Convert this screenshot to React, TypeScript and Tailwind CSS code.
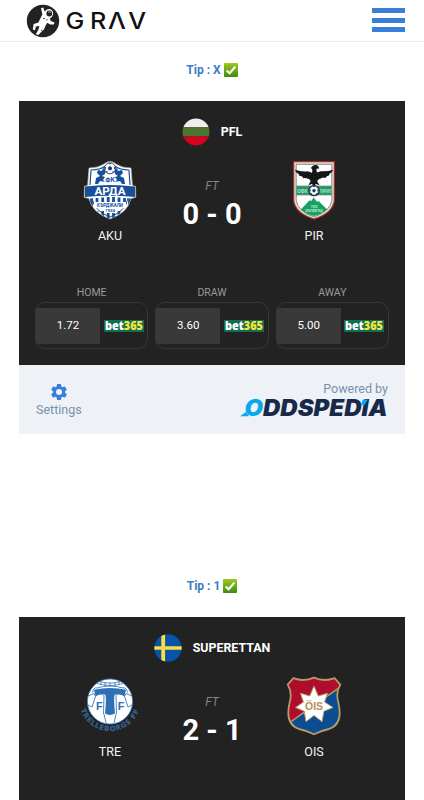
import type { ReactNode } from 'react';

type Odd = { label: string; value: string };

type Match = {
  tip: string;
  league: string;
  flag: ReactNode;
  home: string;
  away: string;
  homeCrest: ReactNode;
  awayCrest: ReactNode;
  score: string;
  odds: Odd[];
};

const GravLogo = () => (
  <svg width="124" height="37" viewBox="0 0 124 37">
    <circle cx="17" cy="17" r="16.2" fill="#222" />
    <path
      d="M15 4.2 17.2 3.6 18.8 7.4Q20.5 4.4 24 5Q27.8 6.5 27 10.7Q26 14 23.8 14.5L24.8 17 28.6 18.4 27.8 20.6 24.2 20.6 21.3 18.8 19.6 21.6 18 25.4 14.2 29 12.4 31 9.8 30.2 12.6 25.2 13.4 22 9.8 22.6 9 26.2 6.8 25.4 7.6 20 12.4 18.4 14.8 13.6 16.4 10.4z"
      fill="#fff"
    />
    <circle cx="23.3" cy="9.5" r="2.9" fill="#222" />
    <path d="M22.2 8.2c1-.8 2.3-.4 2.8.7" stroke="#fff" strokeWidth=".7" fill="none" />
    <path d="M17.2 14.5h1.6M20.3 15.8h1.2M15 26l1.6 1.2" stroke="#222" strokeWidth="1" />
    <text
      transform="scale(1.12 1)"
      x="35.2 57.2 73.2 91.2"
      y="25"
      fontFamily="Inter, sans-serif"
      fontWeight="500"
      fontSize="22.5"
      fill="#111"
    >
      GRΛV
    </text>
  </svg>
);

const Check = () => (
  <svg width="14" height="14" viewBox="0 0 14 14">
    <defs>
      <linearGradient id="check" x1="0" y1="0" x2="0" y2="1">
        <stop offset="0" stopColor="#9ccb1b" />
        <stop offset="1" stopColor="#3d8b14" />
      </linearGradient>
    </defs>
    <rect width="14" height="14" rx=".8" fill="url(#check)" />
    <path d="M2.6 7.5 5.6 10.2 11.4 3.6" stroke="#fff" strokeWidth="2.1" fill="none" />
  </svg>
);

const BulgariaFlag = () => (
  <svg width="28" height="28" viewBox="0 0 28 28">
    <clipPath id="bg-clip">
      <circle cx="14" cy="14" r="13.5" />
    </clipPath>
    <g clipPath="url(#bg-clip)">
      <path d="M0 0h28v9.2H0z" fill="#eee" />
      <path d="M0 9.2h28v9.3H0z" fill="#4c742f" />
      <path d="M0 18.5h28V28H0z" fill="#d8001f" />
    </g>
  </svg>
);

const SwedenFlag = () => (
  <svg width="28" height="28" viewBox="0 0 28 28">
    <clipPath id="se-clip">
      <circle cx="14" cy="14" r="13.7" />
    </clipPath>
    <g clipPath="url(#se-clip)">
      <path d="M0 0h28v28H0z" fill="#0753a8" />
      <path d="M7.3 0h3.8v28H7.3zM0 12.2h28v3.6H0z" fill="#ffda44" />
    </g>
  </svg>
);

const Ball = ({ x, y, r }: { x: number; y: number; r: number }) => (
  <g transform={`translate(${x} ${y}) scale(${r / 5})`}>
    <circle r="5" fill="#fff" stroke="#173a6b" strokeWidth=".8" />
    <path d="M0-2 2-.6 1.2 1.8h-2.4L-2-.6zM-1.6-4.6h3.2L0-3.4zM4.6-1.5 4.4 1.4 3.3-.6zM-4.6-1.5-4.4 1.4-3.3-.6zM2 3l1.6-.5L2.2 4.3zM-2 3l-1.6-.5 1.4 1.8z" fill="#173a6b" />
  </g>
);

const ArdaCrest = () => (
  <svg width="60" height="60" viewBox="0 0 60 60">
    <clipPath id="arda">
      <path d="M8 33h44c-1 12-8 20-22 26C16 53 9 45 8 33z" />
    </clipPath>
    <path d="M9 8Q18 8 24 4Q30-.8 36 4Q42 8 51 8L52.4 25.5 55.6 26.3 55.8 37.3 51 38.5Q48 52.5 30 59Q12 52.5 9 38.5L4.2 37.3 4.4 26.3 7.6 25.5z" fill="#fff" stroke="#c4b38a" strokeWidth=".7" />
    <path d="M11 10Q20 10 25 6.3M49 10Q40 10 35 6.3M11 10 10 25M49 10 50 25" stroke="#174f9b" strokeWidth="1.2" fill="none" />
    <g fill="#174f9b">
      <path d="M15 24l1-6 4-2-3-3 1-3 4 1 1-3 3 2-1 4-3 2 3 1-2 3 2 2-5-1-2 3zM45 24l-1-6-4-2 3-3-1-3-4 1-1-3-3 2 1 4 3 2-3 1 2 3-2 2 5-1 2 3z" />
      <path d="M4.9 26.6Q30 23.6 55.1 26.6V37Q30 34.4 4.9 37z" />
    </g>
    <g clipPath="url(#arda)">
      <path d="M11.5 38.5v12M17 38v4M17 51v5M22.7 37.5v5M22.7 51v8M28.2 37v5M28.2 51v9M33.5 37v5M33.5 51v9M39 37.5v5M39 51v8M44.5 38v5M44.5 51v5M49.5 38.5v8" stroke="#174f9b" strokeWidth="2.8" />
      <path d="M12 38Q14 51 30 57Q46 51 48 38" stroke="#174f9b" strokeWidth="1" fill="none" />
      <path d="M14 42h32v6l-10 1v4h-12v-4l-10-1z" fill="#fff" />
    </g>
    <Ball x={30} y={8.3} r={5.5} />
    <g fontFamily="Roboto, sans-serif" fontWeight="700" textAnchor="middle">
      <text x="30" y="22" fontSize="6.5" fill="#174f9b">ФК</text>
      <text x="30" y="34.6" fontSize="11" textLength="31" lengthAdjust="spacingAndGlyphs" fill="#fff">АРДА</text>
      <text x="30" y="46.6" fontSize="4.6" textLength="26" lengthAdjust="spacingAndGlyphs" fill="#174f9b">КЪРДЖАЛИ</text>
      <text x="30" y="51.8" fontSize="4.4" fill="#174f9b">1924</text>
    </g>
  </svg>
);

const PirinCrest = () => (
  <svg width="60" height="60" viewBox="0 0 60 60">
    <path d="M9.6 1.7h40.8v38.8Q49 53 30 59.2Q11 53 9.6 40.5z" fill="#e8dcd8" stroke="#9d3025" strokeWidth="1.3" />
    <path d="M12.2 4.3h35.6v36Q46.5 51 30 57Q13.5 51 12.2 40.3z" fill="#fff" stroke="#5c5c55" strokeWidth=".7" />
    <path d="M12.4 26.4h35.2v8.2H12.4z" fill="#16a163" />
    <path d="M12.4 26.2h35.2M12.4 34.8h35.2" stroke="#203e31" strokeWidth=".7" />
    <path d="M29.6 37.5 33 41.8l1.5-.8 8.7 8.5Q38 54 30 56.1Q22 54 16.8 49.5l8.8-9.2 1.7.7z" fill="#16a163" />
    <path d="M11 9.7Q18 12 23.5 11.2L28 12.7Q28.8 10.5 28 8.9L26.8 7.9Q29 4.5 32 5.1Q35.4 5.9 35 8.8L32.8 8.4Q32 10 33 12.5L36.7 11.2Q43 11.8 49 9.7Q48.5 12.8 45.6 13.7L45 15.5 42.8 16.2 41.4 18 39 17.5 34.8 19.3 33.1 21.3 35.6 25.2 31.9 24.1 29.8 26.5 28 24.1 24.3 25.3 26.7 21 25 19.1 21.1 18 19.3 18.2 18.2 16.6 15.3 15.7 14.5 13.9Q11.4 12.5 11 9.7z" fill="#161817" />
    <circle cx="30" cy="30.6" r="5.7" fill="#222" />
    <Ball x={30} y={30.6} r={4.6} />
    <g fontFamily="Roboto, sans-serif" fontWeight="700" textAnchor="middle">
      <text x="18.4" y="32.5" fontSize="5.3" textLength="10.5" lengthAdjust="spacingAndGlyphs" fill="#b9dfcd">ОФК</text>
      <text x="41.4" y="32.5" fontSize="5.3" textLength="11" lengthAdjust="spacingAndGlyphs" fill="#b9dfcd">ПИРИН</text>
      <text x="30" y="47.6" fontSize="3" fill="#ccecdc">1922</text>
      <text x="30" y="51.6" fontSize="2.8" textLength="17" lengthAdjust="spacingAndGlyphs" fill="#ccecdc">БЛАГОЕВГРАД</text>
    </g>
  </svg>
);

const TrelleborgCrest = () => (
  <svg width="72" height="66" viewBox="-4 0 72 66" className="shrink-0">
    <path id="tre-arc" d="M1.2 24A30.8 31 0 0 0 62.8 24" fill="none" />
    <circle cx="32" cy="25.5" r="22.6" fill="#fff" stroke="#387bbb" strokeWidth=".8" />
    <g stroke="#387bbb" fill="none">
      <path d="M19 7.5Q32 11.5 45 7.5M21 5.2Q32 9 43 5.2" strokeWidth=".8" />
      <path d="M23 5v4M27 6v4M32 6.5v4M37 6v4M41 5v4" strokeWidth=".9" />
      <path d="M14.5 16.5Q15.5 11 19 12Q32 8 45 12Q48.5 11 49.5 16.5M10 20 16 17.5 17.5 20.5 14 31 10 29M54 20 48 17.5 46.5 20.5 50 31 54 29M17 20.5Q23 16 26 19.5L25.5 38M47 20.5Q41 16 38 19.5L38.5 38M26 38 28 47M38 38 36 47" strokeWidth=".9" />
    </g>
    <path d="M16 13.8Q32 10 48 13.8L46.5 20Q39 16.5 36.5 19.3Q35.5 22 37 37.6Q32 40.2 27 37.6Q28.5 22 27.5 19.3Q25 16.5 17.5 20z" fill="#2d70b4" />
    <g fontFamily="Liberation Sans, sans-serif" fontWeight="700" fill="#2d70b4">
      <text x="18" y="33.5" fontSize="11">F</text>
      <text x="39.8" y="33.5" fontSize="11">F</text>
    </g>
    <text fontFamily="DejaVu Sans, sans-serif" fontWeight="700" fontSize="6.9" letterSpacing=".7" textAnchor="middle" fill="#35618e" stroke="#35618e" strokeWidth=".25">
      <textPath href="#tre-arc" startOffset="50%">
        TRELLEBORGS FF
      </textPath>
    </text>
  </svg>
);

const OrgryteCrest = () => (
  <svg width="60" height="60" viewBox="0 0 60 60">
    <clipPath id="ois">
      <path d="M9.3 2.2Q20 6 30 1.7Q40 6 50.7 2.2L56.3 8.6Q51.8 16 54 25Q60 48 45 53Q36 55 30 58.3Q24 55 15 53Q0 48 6 25Q8.2 16 3.7 8.6z" />
    </clipPath>
    <g clipPath="url(#ois)">
      <path d="M0 0h60v60H0z" fill="#ae0e2c" />
      <path d="M4 48 56 11V60H4z" fill="#0b4d91" />
      <path d="M3 48.5 56 11.2" stroke="#b49a66" strokeWidth="1.5" />
    </g>
    <path d="M9.3 2.2Q20 6 30 1.7Q40 6 50.7 2.2L56.3 8.6Q51.8 16 54 25Q60 48 45 53Q36 55 30 58.3Q24 55 15 53Q0 48 6 25Q8.2 16 3.7 8.6z" fill="none" stroke="#b49a66" strokeWidth="1.8" />
    <path d="M30 10 34.3 20 43.5 17.2 40.6 26 49 31.5 40 35.2 38 45.7 30 39.5 22 45.7 20.2 35.2 11.5 31.5 19.4 26 16.5 17.2 25.7 20z" fill="#fff" stroke="#b49a66" strokeWidth="1" />
    <text x="30" y="33.5" textAnchor="middle" fontFamily="Liberation Sans, sans-serif" fontSize="11" fontWeight="700" textLength="18" lengthAdjust="spacingAndGlyphs" fill="#b29155">
      ÖIS
    </text>
  </svg>
);

const Gear = () => (
  <svg width="20" height="20" viewBox="0 0 24 24" fill="#377fdb">
    <path d="M19.14 12.94c.04-.3.06-.61.06-.94s-.02-.64-.07-.94l2.03-1.58a.49.49 0 0 0 .12-.61l-1.92-3.32a.49.49 0 0 0-.59-.22l-2.39.96a7 7 0 0 0-1.62-.94l-.36-2.54a.48.48 0 0 0-.48-.41h-3.84a.48.48 0 0 0-.47.41l-.36 2.54c-.59.24-1.13.57-1.62.94l-2.39-.96a.48.48 0 0 0-.59.22L2.74 8.87a.48.48 0 0 0 .12.61l2.03 1.58a6 6 0 0 0 0 1.88l-2.03 1.58a.49.49 0 0 0-.12.61l1.92 3.32c.12.22.37.29.59.22l2.39-.96c.5.38 1.03.7 1.62.94l.36 2.54c.05.24.24.41.48.41h3.84c.24 0 .44-.17.47-.41l.36-2.54a7 7 0 0 0 1.62-.94l2.39.96c.22.08.47 0 .59-.22l1.92-3.32a.48.48 0 0 0-.12-.61zM12 15.6a3.6 3.6 0 1 1 0-7.2 3.6 3.6 0 0 1 0 7.2z" />
  </svg>
);

const OddspediaLogo = () => (
  <svg width="148" height="26" viewBox="0 0 148 26">
    <path d="M0 18.2 6 14 9 18.2z" fill="#08a9ec" />
    <text
      x="4.5"
      y="17.8"
      fontFamily="Inter, sans-serif"
      fontWeight="900"
      fontStyle="italic"
      fontSize="22.3"
      textLength="143"
      lengthAdjust="spacingAndGlyphs"
      fill="#182a49"
    >
      <tspan fill="#08a9ec">O</tspan>DDSPEDIA
    </text>
    <path d="M120.6 7.2 123 1.6h5l-3.6 5.6z" fill="#08a9ec" />
  </svg>
);

const Bet365 = () => (
  <div className="flex h-3 w-10 items-center justify-center bg-[#126e51]">
    <svg width="44" height="22" viewBox="0 0 44 22" className="shrink-0">
      <text x="3" y="15" fontFamily="Open Sans, sans-serif" fontWeight="800" fontSize="12" textLength="38" lengthAdjust="spacingAndGlyphs" fill="#fff">
        bet<tspan fill="#f5e33b">365</tspan>
      </text>
    </svg>
  </div>
);

const Team = ({ name, crest }: { name: string; crest: ReactNode }) => (
  <div className="flex w-[102px] flex-col items-center">
    <div className="flex h-[60px] justify-center">{crest}</div>
    <span className="mt-2 text-[12.5px] leading-4 text-[#f2f2f2]">{name}</span>
  </div>
);

const matches: Match[] = [
  {
    tip: 'Tip : X',
    league: 'PFL',
    flag: <BulgariaFlag />,
    home: 'AKU',
    away: 'PIR',
    homeCrest: <ArdaCrest />,
    awayCrest: <PirinCrest />,
    score: '0 - 0',
    odds: [
      { label: 'HOME', value: '1.72' },
      { label: 'DRAW', value: '3.60' },
      { label: 'AWAY', value: '5.00' },
    ],
  },
  {
    tip: 'Tip : 1',
    league: 'SUPERETTAN',
    flag: <SwedenFlag />,
    home: 'TRE',
    away: 'OIS',
    homeCrest: <TrelleborgCrest />,
    awayCrest: <OrgryteCrest />,
    score: '2 - 1',
    odds: [],
  },
];

const MatchCard = ({ match }: { match: Match }) => (
  <section className="h-[516px] shrink-0 px-[19px] pt-5">
    <div className="flex h-4 items-center justify-center gap-[3px] text-xs font-bold text-[#3a7ec5]">
      {match.tip}
      <Check />
    </div>
    <div className="mt-[23px] h-[264px] bg-[#222] pt-[17px]">
      <div className="flex h-7 items-center justify-center gap-[11px] text-[12.4px] font-bold text-white">
        {match.flag}
        {match.league}
      </div>
      <div className="mt-3.5 flex justify-center">
        <Team name={match.home} crest={match.homeCrest} />
        <div className="flex w-[102px] flex-col items-center pt-[18px]">
          <span className="text-xs leading-4 text-[#858585] italic">FT</span>
          <span className="mt-1 text-[29px] leading-8 font-bold text-white">{match.score}</span>
        </div>
        <Team name={match.away} crest={match.awayCrest} />
      </div>
      <div className="mt-[41px] flex gap-[7px] px-4">
        {match.odds.map((odd) => (
          <div key={odd.label} className="flex-1">
            <div className="text-center text-[10.5px] leading-4 text-[#999]">{odd.label}</div>
            <div className="mt-px flex h-[47px] items-center rounded-[10px] border-[1.5px] border-[#373737]">
              <div className="flex h-9 w-16 items-center justify-center bg-[#393939] text-[11.5px] text-white">{odd.value}</div>
              <div className="flex flex-1 justify-center">
                <Bet365 />
              </div>
            </div>
          </div>
        ))}
      </div>
    </div>
    {match.odds.length > 0 && (
      <footer className="flex h-[69px] justify-between bg-[#eef2f6] px-[17px] text-[12.5px] text-[#7890ac]">
        <div className="flex flex-col items-center pt-[17px]">
          <Gear />
          <span className="leading-4">Settings</span>
        </div>
        <div className="flex flex-col items-end pt-4">
          <span className="leading-4">Powered by</span>
          <div className="mt-px">
            <OddspediaLogo />
          </div>
        </div>
      </footer>
    )}
  </section>
);

export default function App() {
  return (
    <div className="flex h-[800px] w-[424px] flex-col overflow-hidden bg-white font-[Roboto,sans-serif]">
      <header className="flex h-[42px] shrink-0 justify-between border-b border-[#eee] pt-1 pr-[19px] pl-[26px]">
        <GravLogo />
        <button type="button" aria-label="Menu" className="flex w-[33px] flex-col gap-[4.5px] pt-1">
          <span className="h-[5px] w-full bg-[#377fdb]" />
          <span className="h-[5px] w-full bg-[#377fdb]" />
          <span className="h-[5px] w-full bg-[#377fdb]" />
        </button>
      </header>
      {matches.map((match) => (
        <MatchCard key={match.league} match={match} />
      ))}
    </div>
  );
}
